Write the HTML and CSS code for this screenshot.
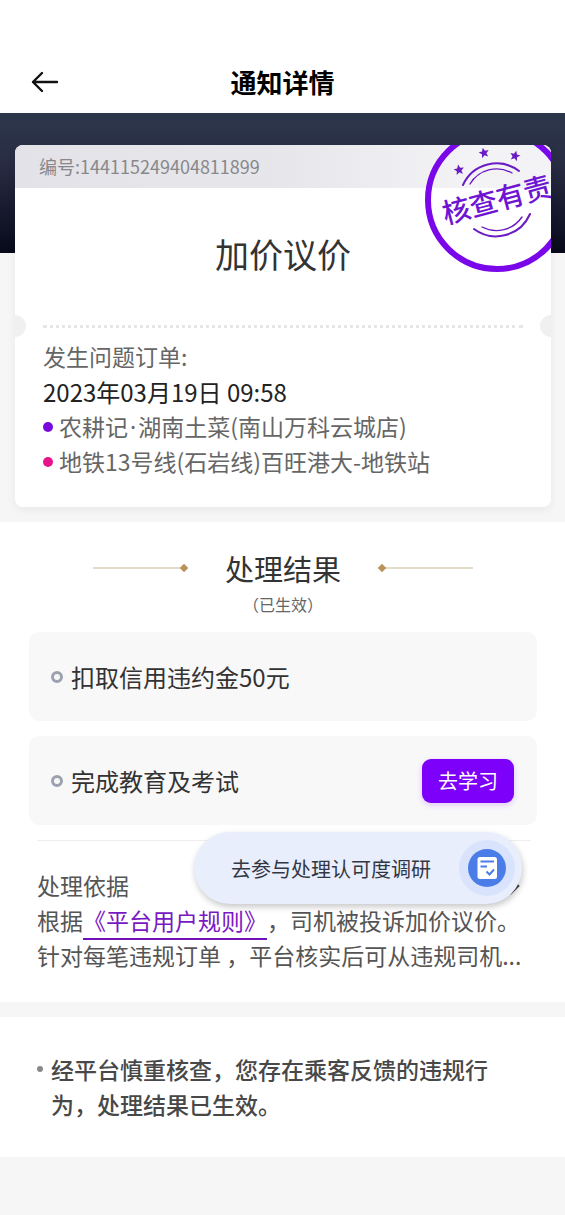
FILE: index.html
```html
<!DOCTYPE html>
<html lang="zh-CN">
<head>
<meta charset="UTF-8">
<meta name="viewport" content="width=device-width,initial-scale=1">
<title>通知详情</title>
<link rel="stylesheet" href="styles.css">
</head>
<body>

<div class="wrap">
    <header class="header">
        <button class="back" type="button" aria-label="返回">
            <svg width="28" height="22" viewBox="0 0 28 22" fill="none" stroke="#111" stroke-width="2.4" stroke-linecap="round" stroke-linejoin="round">
                <path d="M2 11H26M11 2L2 11L11 20"/>
            </svg>
        </button>
        <h1>通知详情</h1>
    </header>

    <div class="top">
        <div class="card">
            <div class="card-no">编号:144115249404811899</div>
            <!-- 印章 -->
            <svg class="stamp" width="144" height="144" viewBox="0 0 144 144" fill="none" stroke="#7a06ea">
                <circle cx="72" cy="72" r="69" stroke-width="6"/>
                <g stroke="#6a1bc4" stroke-linecap="round">
                    <path d="M38 57A37 37 0 0 1 94 43" stroke-width="2"/>
                    <path d="M45 56A31 31 0 0 1 87 45" stroke-width="1.4"/>
                    <path d="M49 101A37 37 0 0 0 105 86" stroke-width="2"/>
                    <path d="M57 99A31 31 0 0 0 97 89" stroke-width="1.4"/>
                </g>
                <defs>
                    <path id="star" d="M0 -5.5L1.5 -1.9L5.2 -1.7L2.3 .8L3.2 4.5L0 2.4L-3.2 4.5L-2.3 .8L-5.2 -1.7L-1.5 -1.9Z" fill="#6a1bc4" stroke="none"/>
                </defs>
                <use href="#star" transform="translate(34 42) rotate(-10)"/>
                <use href="#star" transform="translate(59 25) rotate(-14)"/>
                <use href="#star" transform="translate(90 28) rotate(14)"/>
                <text class="stamp-text" x="72" y="82" text-anchor="middle" transform="rotate(-15 72 72)">核查有责</text>
            </svg>
            <h2>加价议价</h2>
            <div class="tear"><i class="dots"></i></div>
            <div class="order">
                <p>发生问题订单:</p>
                <p class="time">2023年03月19日 09:58</p>
                <p class="addr"><span>农耕记<b>·</b>湖南土菜(南山万科云城店)</span></p>
                <p class="addr end">地铁13号线(石岩线)百旺港大-地铁站</p>
            </div>
        </div>
    </div>

    <div class="result">
        <div class="result-title">
            <span class="line"></span>
            <h3>处理结果</h3>
            <span class="line right"></span>
        </div>
        <p class="state">（已生效）</p>
        <ul class="list">
            <li>扣取信用违约金50元</li>
            <li>完成教育及考试<button class="study" type="button">去学习</button></li>
        </ul>
        <div class="basis">
            <div class="basis-title">
                <span>处理依据</span>
                <svg width="12" height="20" viewBox="0 0 12 20" fill="none" stroke="#444" stroke-width="2.4"><path d="M2 2L10 10L2 18"/></svg>
            </div>
            <p>根据<a href="#">《平台用户规则》</a>，司机被投诉加价议价。</p>
            <p>针对每笔违规订单 ，平台核实后可从违规司机...</p>
            <button class="survey" type="button">
                <span>去参与处理认可度调研</span>
                <svg width="58" height="58" viewBox="0 0 58 58" fill="none">
                    <circle cx="29" cy="29" r="28" fill="#d9e4fc"/>
                    <circle cx="29" cy="29" r="19" fill="#4b7de8"/>
                    <rect x="19.500" y="18" width="19.500" height="22" rx="2.500" fill="#fff"/>
                    <path d="M22.500 22.500H36M22.500 27.500H29" stroke="#4b7de8" stroke-width="2"/>
                    <path d="M28.500 32.500L31.500 35.500L36 30.500" stroke="#4b7de8" stroke-width="2"/>
                </svg>
            </button>
        </div>
    </div>

    <div class="notice">
        <p>经平台慎重核查，您存在乘客反馈的违规行为，处理结果已生效。</p>
    </div>
</div>

</body>
</html>
```
FILE: styles.css
```css
*,
*::before,
*::after {
    margin: 0;
    padding: 0;
    box-sizing: border-box;
}

body {
    font-family: "Noto Sans CJK SC", "Noto Sans", sans-serif;
    font-size: 23px;
    line-height: 35px;
    color: #555;
    background: #f6f6f6;
    text-spacing-trim: space-all;
}

button {
    border: 0;
    font-family: inherit;
    cursor: pointer;
}

svg {
    display: block;
}

ul {
    list-style: none;
}

.wrap {
    overflow: hidden;
}

.header {
    display: grid;
    grid-template-columns: 60px 1fr 60px;
    align-items: center;
    height: 113px;
    padding-top: 50px;
    background: #fff;
}

.back {
    padding-left: 31px;
    background: none;
}

.header h1 {
    font-size: 26px;
    font-weight: 700;
    color: #000;
    text-align: center;
}

/* 顶部卡片 */
.top {
    padding: 32px 14px 15px 15px;
    background: linear-gradient(#2c374b, #292d44 35%, #080a1b) no-repeat;
    background-size: 100% 140px;
}

.card {
    position: relative;
    overflow: hidden;
    border-radius: 8px;
    background: #fff;
    box-shadow: 0 3px 10px rgba(0, 0, 0, .06);
}

.card-no {
    height: 43px;
    padding-left: 24px;
    line-height: 42px;
    font-size: 18px;
    color: #88888c;
    background: linear-gradient(90deg, #e2e2e8, #e7e7eb 50%, #f3f3f6 85%);
}

.stamp {
    position: absolute;
    top: -17px;
    right: -18px;
}

.stamp-text {
    font-size: 28px;
    font-weight: 500;
    fill: #6f14d2;
    stroke: none;
}

.card h2 {
    padding: 41px 0 36px;
    line-height: 50px;
    font-size: 34px;
    font-weight: 400;
    color: #333;
    text-align: center;
}

.tear {
    display: flex;
    align-items: center;
}

.tear::before,
.tear::after {
    content: "";
    width: 11px;
    height: 22px;
    border-radius: 0 11px 11px 0;
    background: #f0f0f0;
}

.tear::after {
    border-radius: 11px 0 0 11px;
}

.dots {
    flex: 1;
    margin: 0 17px;
    border-top: 3px dotted #e6e6e6;
}

.order {
    padding: 2px 28px 28px;
    color: #666;
}

.order .time {
    font-size: 24px;
    color: #222;
}

.addr {
    display: flex;
    align-items: center;
    gap: 6px;
}

.addr::before {
    content: "";
    width: 10px;
    height: 10px;
    border-radius: 50%;
    background: #7808dc;
}

.addr.end::before {
    background: #e5148c;
}

.addr b {
    padding: 0 2px;
    font-family: "Noto Sans", sans-serif;
    font-weight: 400;
    line-height: 1;
}

/* 处理结果 */
.result {
    padding: 28px 28px 29px 29px;
    background: #fff;
}

.result-title {
    display: flex;
    align-items: center;
    justify-content: center;
    gap: 38px;
}

.result-title h3 {
    line-height: 36px;
    font-size: 29px;
    font-weight: 400;
    color: #333;
}

.line {
    display: flex;
    align-items: center;
    width: 94px;
}

.line::before {
    content: "";
    flex: 1;
    height: 2px;
    background: #e3dccb;
}

.line::after {
    content: "";
    width: 6px;
    height: 6px;
    background: #b8935a;
    transform: rotate(45deg);
}

.line.right {
    flex-direction: row-reverse;
}

.state {
    line-height: 36px;
    font-size: 16px;
    color: #666;
    text-align: center;
}

.list {
    display: grid;
    gap: 15px;
    padding-top: 10px;
}

.list li {
    display: flex;
    align-items: center;
    min-height: 89px;
    padding: 0 23px 0 22px;
    border-radius: 10px;
    font-size: 24px;
    color: #333;
    background: #f8f8f8;
}

.list li::before {
    content: "";
    width: 12px;
    height: 12px;
    margin-right: 8px;
    border: 3px solid #9ca1b0;
    border-radius: 50%;
}

.study {
    height: 44px;
    margin-left: auto;
    padding: 0 16px;
    border-radius: 9px;
    font-size: 20px;
    color: #fff;
    background: #7d00fb;
    box-shadow: 0 2px 6px rgba(125, 0, 251, .2);
}

.basis {
    position: relative;
    margin: 15px 6px 0 8px;
    padding-top: 27px;
    border-top: 1px solid #eee;
}

.basis p {
    white-space: nowrap;
}

.basis-title {
    display: flex;
    align-items: center;
    justify-content: space-between;
    padding-right: 11px;
}

.basis a {
    padding-bottom: 1px;
    border-bottom: 2px solid #6f10b8;
    color: #7a18c4;
    text-decoration: none;
}

/* 悬浮的调研入口 */
.survey {
    position: absolute;
    top: -9px;
    right: 9px;
    display: flex;
    align-items: center;
    gap: 27px;
    height: 72px;
    padding: 0 6px 0 37px;
    border-radius: 36px;
    font-size: 20px;
    color: #333743;
    background: #e9eefd;
    box-shadow: 1px 3px 6px rgba(0, 0, 0, .22);
}

.notice {
    margin-top: 15px;
    padding: 35px 60px 35px 37px;
    background: #fff;
}

.notice p {
    display: flex;
    gap: 8px;
    font-weight: 500;
    color: #484848;
}

.notice p::before {
    content: "";
    flex: none;
    width: 6px;
    height: 6px;
    margin-top: 14px;
    border-radius: 50%;
    background: #888;
}
```
